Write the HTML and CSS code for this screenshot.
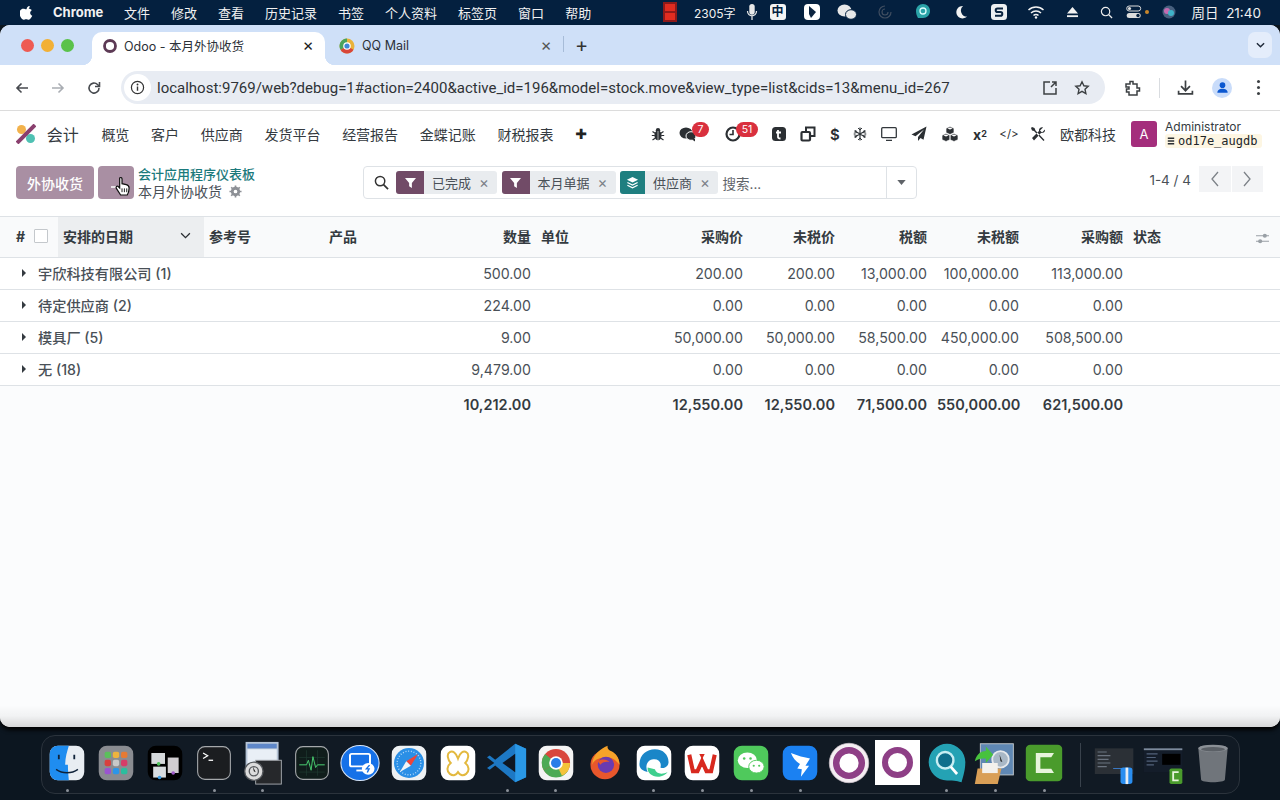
FILE: index.html
```html
<!DOCTYPE html>
<html lang="zh-CN">
<head>
<meta charset="utf-8">
<title>Odoo - 本月外协收货</title>
<link rel="stylesheet" href="styles.css">
</head>
<body>
<header class="menubar">
  <svg class="apple" viewBox="0 0 14 16"><path fill="#fff" d="M10.4 1c.1 1-.3 1.9-.9 2.6-.6.7-1.5 1.200-2.400 1.100-.1-1 .4-1.900.9-2.500C8.600 1.500 9.600 1 10.400 1zM13.200 11.500c-.4.900-.6 1.300-1.100 2-.7 1.100-1.600 2.400-2.800 2.400-1 0-1.300-.6-2.700-.6s-1.700.6-2.700.6c-1.200 0-2.100-1.200-2.800-2.200C-.8 10.800-1 7.500.2 5.800 1 4.600 2.300 3.900 3.500 3.900c1.300 0 2.100.7 3.100.7 1 0 1.600-.7 3.100-.7 1.100 0 2.200.6 3 1.600-2.600 1.400-2.200 5.100.5 6z"/></svg>
  <b class="appname">Chrome</b>
  <nav class="menus"><span>文件</span><span>修改</span><span>查看</span><span>历史记录</span><span>书签</span><span>个人资料</span><span>标签页</span><span>窗口</span><span>帮助</span></nav>
  <div class="status">
    <svg class="st st-rec" viewBox="0 0 14 20"><rect width="14" height="20" fill="#8e1a1a"/><rect x="2" y="2" width="10" height="7" fill="#e02c20"/><rect x="2" y="11" width="10" height="7" fill="#e02c20"/></svg>
    <span class="st-count">2305字</span>
    <svg class="st st-mic" viewBox="0 0 14 20"><rect x="4" y="1" width="6" height="12" rx="3" fill="#e8e8e8"/><path d="M2 9c0 7 10 7 10 0M7 15v4" stroke="#e8e8e8" fill="none" stroke-width="1.400"/></svg>
    <span class="st-ime">中</span>
    <svg class="st st-tag" viewBox="0 0 16 16"><rect width="16" height="16" rx="4" fill="#fff"/><path d="M5 2l7 6-5 6-2-4z" fill="#0b2440"/></svg>
    <svg class="st st-chat" viewBox="0 0 20 16"><ellipse cx="7.500" cy="6.500" rx="7" ry="6" fill="#e8e8e8"/><ellipse cx="14" cy="10.500" rx="5.500" ry="4.800" fill="#e8e8e8" stroke="#04203f"/></svg>
    <svg class="st st-spiral" viewBox="0 0 16 16"><path d="M8 2a6 6 0 1 0 6 6M8 5a3 3 0 1 0 3 3" fill="none" stroke="#3f4d60" stroke-width="1.200"/></svg>
    <svg class="st st-q" viewBox="0 0 16 18"><path d="M8 1c4 0 7 3 7 7s-3 7-7 7H3C2 13 1 11 1 8c0-4 3-7 7-7z" fill="#2aa3a8"/><circle cx="8" cy="8" r="3" fill="none" stroke="#dff" stroke-width="1.300"/></svg>
    <svg class="st st-moon" viewBox="0 0 14 14"><path d="M9 1a6.200 6.200 0 1 0 4 10.500A6 6 0 0 1 9 1z" fill="#f2f2f2"/></svg>
    <svg class="st st-s" viewBox="0 0 16 16"><rect width="16" height="16" rx="3.500" fill="#eef0f2"/><path d="M12 4.500H6.500a1.800 1.800 0 0 0 0 3.600h3a1.800 1.800 0 0 1 0 3.600H4" fill="none" stroke="#0b2440" stroke-width="2"/></svg>
    <svg class="st st-wifi" viewBox="0 0 18 14"><path d="M1.500 5a11 11 0 0 1 15 0M4 8a7.300 7.300 0 0 1 10 0M6.500 10.500a3.500 3.500 0 0 1 5 0" fill="none" stroke="#f2f2f2" stroke-width="1.500"/><circle cx="9" cy="12.500" r="1.200" fill="#f2f2f2"/></svg>
    <svg class="st st-eject" viewBox="0 0 14 12"><path d="M7 0l6 7H1z" fill="#f2f2f2"/><rect x="1" y="9" width="12" height="2" fill="#f2f2f2"/></svg>
    <svg class="st st-search" viewBox="0 0 14 14"><circle cx="6" cy="6" r="4.500" fill="none" stroke="#eee" stroke-width="1.300"/><path d="M9.500 9.500l3.500 3.500" stroke="#eee" stroke-width="1.400"/></svg>
    <svg class="st st-cc" viewBox="0 0 16 14"><rect x=".7" y="1" width="14" height="5" rx="2.500" fill="none" stroke="#ddd"/><circle cx="3.500" cy="3.500" r="1.600" fill="#ddd"/><rect x=".7" y="8" width="14" height="5" rx="2.500" fill="#ddd"/><circle cx="12" cy="10.500" r="1.700" fill="#04203f"/></svg>
    <i class="st-dot"></i>
    <svg class="st st-siri" viewBox="0 0 14 14"><circle cx="7" cy="7" r="6.500" fill="#47607f"/><circle cx="5" cy="6" r="3" fill="#c46bb2"/><circle cx="9" cy="8" r="3" fill="#3fb3c9"/></svg>
    <span class="st-clock">周日&nbsp; 21:40</span>
  </div>
</header>

<div class="window">
  <div class="tabstrip">
    <div class="lights"><i class="red"></i><i class="amber"></i><i class="green"></i></div>
    <div class="tab tab-active">
      <svg class="fav" viewBox="0 0 16 16"><circle cx="8" cy="8" r="5.500" fill="none" stroke="#5d3a55" stroke-width="2.800"/></svg>
      <span class="tab-title">Odoo - 本月外协收货</span><span class="tab-x">×</span>
    </div>
    <div class="tab tab-idle">
      <svg class="fav" viewBox="0 0 16 16"><circle cx="8" cy="8" r="7.500" fill="#e9b23a"/><path d="M8 8l6.500 3.700A7.500 7.500 0 0 1 1.500 11.700z" fill="#d8463a"/><path d="M8 8L1.500 11.700A7.500 7.500 0 0 1 8 .5z" fill="#4aa35c"/><circle cx="8" cy="8" r="3.800" fill="#fff"/><circle cx="8" cy="8" r="2.600" fill="#3f87d6"/></svg>
      <span class="tab-title">QQ Mail</span><span class="tab-x tab-x-dim">×</span>
    </div>
    <i class="tab-sep"></i>
    <span class="tab-plus">+</span>
    <span class="tab-menu"><svg viewBox="0 0 10 6"><path d="M1 1l4 4 4-4" fill="none" stroke="#1f2a3a" stroke-width="1.600"/></svg></span>
  </div>

  <div class="toolbar">
    <svg class="tb tb-back" viewBox="0 0 16 16"><path d="M14 8H3M7.500 3.500L3 8l4.500 4.500" fill="none" stroke="#474a4f" stroke-width="1.600"/></svg>
    <svg class="tb tb-fwd" viewBox="0 0 16 16"><path d="M2 8h11M8.500 3.500L13 8l-4.500 4.500" fill="none" stroke="#a9adb3" stroke-width="1.600"/></svg>
    <svg class="tb tb-reload" viewBox="0 0 16 16"><path d="M13 8a5 5 0 1 1-1.500-3.500L13 6" fill="none" stroke="#474a4f" stroke-width="1.600"/><path d="M13.500 2v4.500H9" fill="none" stroke="#474a4f" stroke-width="1.600"/></svg>
    <div class="omnibox">
      <span class="info"><svg viewBox="0 0 16 16"><circle cx="8" cy="8" r="6.500" fill="none" stroke="#333" stroke-width="1.300"/><path d="M8 7v4.500" stroke="#333" stroke-width="1.500"/><circle cx="8" cy="4.800" r="1" fill="#333"/></svg></span>
      <span class="url">localhost:9769/web?debug=1#action=2400&amp;active_id=196&amp;model=stock.move&amp;view_type=list&amp;cids=13&amp;menu_id=267</span>
      <svg class="omni-i omni-open" viewBox="0 0 16 16"><path d="M8 2H2v12h12V8M9 7l5-5M10 2h4v4" fill="none" stroke="#3c4043" stroke-width="1.500"/></svg>
      <svg class="omni-i omni-star" viewBox="0 0 16 16"><path d="M8 1.800l1.900 4 4.300.5-3.200 3 .9 4.300L8 11.400l-3.900 2.200.9-4.300-3.200-3 4.300-.5z" fill="none" stroke="#3c4043" stroke-width="1.400"/></svg>
    </div>
    <svg class="tb tb-ext" viewBox="0 0 18 18"><path d="M3 5h4V2.500h3V5h4v4h2.500v3H14v4H6v-3H3.500v-3H6V8H3z" fill="none" stroke="#3c4043" stroke-width="1.500"/></svg>
    <i class="tb-sep"></i>
    <svg class="tb tb-dl" viewBox="0 0 16 16"><path d="M8 1.500v9M3.800 6.800L8 11l4.200-4.200M1.500 11v3h13v-3" fill="none" stroke="#3c4043" stroke-width="1.600"/></svg>
    <span class="profile"><svg viewBox="0 0 16 16"><circle cx="8" cy="5.500" r="3" fill="#0b57d0"/><path d="M2.500 13.500c0-3 2.500-4.300 5.500-4.300s5.500 1.300 5.500 4.300z" fill="#0b57d0"/></svg></span>
    <span class="kebab"><i></i><i></i><i></i></span>
  </div>

  <div class="app">
    <div class="o-nav">
      <div class="o-left">
        <svg class="o-logo" viewBox="0 0 20 20"><circle cx="5.500" cy="5.500" r="4.500" fill="#f2b24c"/><circle cx="14.500" cy="14.500" r="4.500" fill="#4fc1b3"/><path d="M1 19L19 1" stroke="#8a3f6e" stroke-width="4"/></svg>
        <span class="o-app">会计</span>
        <span>概览</span><span>客户</span><span>供应商</span><span>发货平台</span><span>经营报告</span><span>金蝶记账</span><span>财税报表</span>
        <b class="o-plus">✚</b>
      </div>
      <div class="o-right">
        <span class="ni"><svg viewBox="0 0 14 14"><ellipse cx="7" cy="8.500" rx="3.600" ry="4.800" fill="#2b2f33"/><circle cx="7" cy="3.200" r="2.200" fill="#2b2f33"/><path d="M7 4v9" stroke="#fff" stroke-width=".6"/><path d="M1.500 4.500l3 2M12.500 4.500l-3 2M.8 8.500h3M13.200 8.500h-3M1.500 13l3-2M12.500 13l-3-2" stroke="#2b2f33" stroke-width="1.200"/></svg></span>
        <span class="ni g10"><svg class="i18" viewBox="0 0 18 16"><ellipse cx="7" cy="7" rx="6.500" ry="5.500" fill="#2b2f33"/><ellipse cx="12" cy="10" rx="5" ry="4.300" fill="#2b2f33" stroke="#fff"/><path d="M13 13.500l3 2v-3z" fill="#2b2f33"/></svg><b class="badge b-chat">7</b></span>
        <span class="ni g25"><svg class="i18" viewBox="0 0 16 16"><circle cx="8" cy="8" r="6.500" fill="none" stroke="#2b2f33" stroke-width="2.200"/><path d="M8 4v4.500H4.500" fill="none" stroke="#2b2f33" stroke-width="1.600"/></svg><b class="badge b-clock">51</b></span>
        <span class="ni g26"><svg viewBox="0 0 14 14"><rect width="14" height="14" rx="3.500" fill="#2b2f33"/><path d="M6 3v7c0 1 .6 1.500 2.500 1.500M4 5.500h5" stroke="#fff" stroke-width="1.800" fill="none"/></svg></span>
        <span class="ni g9"><svg class="i16" viewBox="0 0 16 16"><path d="M6 5V1.500h8.500V10H11" fill="none" stroke="#2b2f33" stroke-width="2"/><rect x="1.500" y="6" width="8.500" height="8.500" rx="1" fill="none" stroke="#2b2f33" stroke-width="2.200"/></svg></span>
        <span class="ni g7 ni-text">$</span>
        <span class="ni g5"><svg viewBox="0 0 14 14"><path d="M7 .5v13M1.400 3.800l11.200 6.400M12.600 3.800L1.400 10.200" stroke="#33383c" stroke-width="1.200"/><path d="M5 1l2 2 2-2M5 13l2-2 2 2M.8 6.200l2.700-.5-.9-2.700M13.200 7.800l-2.700.5.900 2.700M13.200 6.200l-2.700-.5.900-2.700M.8 7.800l2.700.5-.9 2.700" stroke="#33383c" fill="none" stroke-width="1"/></svg></span>
        <span class="ni g9"><svg class="i16" viewBox="0 0 16 14"><rect x=".7" y=".7" width="14.600" height="10" rx="1" fill="none" stroke="#33383c" stroke-width="1.300"/><path d="M5 13.300h6" stroke="#33383c" stroke-width="1.300"/></svg></span>
        <span class="ni g10"><svg class="i16" viewBox="0 0 16 16"><path d="M15.500.5L.5 8.500l4 1.800L13 3.500 7 11v4l2.500-3 3 1.800z" fill="#2b2f33"/></svg></span>
        <span class="ni g11"><svg class="i18" viewBox="0 0 18 16"><path d="M9 .5l4 1.800v4.400L9 8.500 5 6.700V2.300zM5 7.500l4 1.800v4.400l-4 1.800-4-1.800V9.300zM13 7.500l4 1.800v4.400l-4 1.800-4-1.800V9.300z" fill="#2b2f33" stroke="#fff" stroke-width=".7"/><path d="M6.500 2.500L9 3.600l2.500-1.100-2.500-1zM2.500 9.500L5 10.600l2.500-1.100L5 8.500zM10.500 9.500l2.500 1.100 2.500-1.100-2.500-1z" fill="#fff"/></svg></span>
        <span class="ni g10 ni-sup">x<sup>2</sup></span>
        <span class="ni g9 ni-code">&lt;/&gt;</span>
        <span class="ni g9"><svg class="i16" viewBox="0 0 16 16"><path d="M2 1l2.500 1 1 2.500L14.500 14 13.500 15 4 5 2 4.500 1 2zM15 3.500l-3 3-2-2 3-3c-2-.6-4.500 1-4 3.500L2 12l2 2.500L11 7c2.500.5 4.600-1.500 4-3.500z" fill="#2b2f33"/></svg></span>
        <span class="o-company">欧都科技</span>
        <span class="avatar">A</span>
        <div class="user"><span class="user-name">Administrator</span><span class="user-db"><svg viewBox="0 0 10 12"><path d="M1 1.500h8v2H1zM1 5h8v2H1zM1 8.500h8v2H1z" fill="#2b2f33"/></svg>od17e_augdb</span></div>
      </div>
    </div>

    <div class="cp">
      <div class="cp-left">
        <button class="btn btn-main">外协收货</button>
        <button class="btn btn-dl"><svg viewBox="0 0 12 12"><path d="M1 10h7" stroke="#fff" stroke-width="1.500"/></svg></button>
        <div class="crumbs">
          <a class="crumb-link">会计应用程序仪表板</a>
          <span class="crumb-now">本月外协收货 <svg viewBox="0 0 14 14"><circle cx="7" cy="7" r="3.500" fill="none" stroke="#8d9096" stroke-width="3"/><path d="M7 .5v3M7 10.500v3M.5 7h3M10.500 7h3M2.400 2.400l2 2M9.600 9.600l2 2M11.600 2.400l-2 2M4.400 9.600l-2 2" stroke="#8d9096" stroke-width="1.800"/></svg></span>
        </div>
      </div>
      <div class="search">
        <svg class="search-i" viewBox="0 0 16 16"><circle cx="6.500" cy="6.500" r="5" fill="none" stroke="#333" stroke-width="1.600"/><path d="M10.200 10.200L15 15" stroke="#333" stroke-width="1.800"/></svg>
        <span class="facet"><span class="facet-i"><svg viewBox="0 0 12 12"><path d="M0 1h12L7.500 6.500V12L4.500 10V6.500z" fill="#fff"/></svg></span><span class="facet-t">已完成</span><span class="facet-x">×</span></span>
        <span class="facet"><span class="facet-i"><svg viewBox="0 0 12 12"><path d="M0 1h12L7.500 6.500V12L4.500 10V6.500z" fill="#fff"/></svg></span><span class="facet-t">本月单据</span><span class="facet-x">×</span></span>
        <span class="facet facet-teal"><span class="facet-i"><svg viewBox="0 0 14 14"><path d="M7 1l6 3-6 3-6-3z" fill="#fff"/><path d="M1.500 7L7 9.800 12.500 7M1.500 10L7 12.800 12.500 10" fill="none" stroke="#fff" stroke-width="1.400"/></svg></span><span class="facet-t">供应商</span><span class="facet-x">×</span></span>
        <span class="search-ph">搜索...</span>
        <span class="search-dd"><svg viewBox="0 0 10 6"><path d="M0 0h10L5 6z" fill="#5f6368"/></svg></span>
      </div>
      <div class="pager">
        <span class="pager-t">1-4 / 4</span>
        <div class="pager-b">
          <span><svg viewBox="0 0 10 16"><path d="M8 1L2 8l6 7" fill="none" stroke="#7d8288" stroke-width="1.300"/></svg></span>
          <span><svg viewBox="0 0 10 16"><path d="M2 1l6 7-6 7" fill="none" stroke="#7d8288" stroke-width="1.300"/></svg></span>
        </div>
      </div>
    </div>

    <table class="list">
      <colgroup><col class="c1"><col class="c2"><col class="c3"><col class="c4"><col class="c5"><col class="c6"><col class="c7"><col class="c8"><col class="c9"><col class="c10"><col class="c11"><col class="c12"></colgroup>
      <thead>
        <tr>
          <th class="th-sel"><span class="hash">#</span><i class="chk"></i></th>
          <th class="th-sort"><span>安排的日期</span><svg viewBox="0 0 12 8"><path d="M1 1.500l5 5 5-5" fill="none" stroke="#2b2f33" stroke-width="1.500"/></svg></th>
          <th>参考号</th><th>产品</th><th class="r">数量</th><th>单位</th><th class="r">采购价</th><th class="r">未税价</th><th class="r">税额</th><th class="r">未税额</th><th class="r">采购额</th>
          <th class="th-status"><span>状态</span><svg viewBox="0 0 16 14"><path d="M1 4h14M1 10h14" stroke="#9aa0a6" stroke-width="1.200"/><circle cx="10.500" cy="4" r="2.200" fill="#9aa0a6"/><circle cx="5.500" cy="10" r="2.200" fill="#9aa0a6"/></svg></th>
        </tr>
      </thead>
      <tbody>
        <tr><td colspan="4" class="group"><i class="caret"></i>宇欣科技有限公司 (1)</td><td class="r">500.00</td><td></td><td class="r">200.00</td><td class="r">200.00</td><td class="r">13,000.00</td><td class="r">100,000.00</td><td class="r">113,000.00</td><td></td></tr>
        <tr><td colspan="4" class="group"><i class="caret"></i>待定供应商 (2)</td><td class="r">224.00</td><td></td><td class="r">0.00</td><td class="r">0.00</td><td class="r">0.00</td><td class="r">0.00</td><td class="r">0.00</td><td></td></tr>
        <tr><td colspan="4" class="group"><i class="caret"></i>模具厂 (5)</td><td class="r">9.00</td><td></td><td class="r">50,000.00</td><td class="r">50,000.00</td><td class="r">58,500.00</td><td class="r">450,000.00</td><td class="r">508,500.00</td><td></td></tr>
        <tr><td colspan="4" class="group"><i class="caret"></i>无 (18)</td><td class="r">9,479.00</td><td></td><td class="r">0.00</td><td class="r">0.00</td><td class="r">0.00</td><td class="r">0.00</td><td class="r">0.00</td><td></td></tr>
      </tbody>
      <tfoot>
        <tr><td colspan="4"></td><td class="r">10,212.00</td><td></td><td class="r">12,550.00</td><td class="r">12,550.00</td><td class="r">71,500.00</td><td class="r">550,000.00</td><td class="r">621,500.00</td><td></td></tr>
      </tfoot>
    </table>
    <div class="list-rest"></div>
  </div>
  <svg class="hand" viewBox="0 0 18 22"><path d="M6 2c1-1 2.500-.5 2.500 1v5l4.500 1c2 .5 3 1.500 3 3.500 0 3-.5 5-2 7.500H7L2.500 13c-1-1.500.8-3 2-2L6 12.500z" fill="#fff" stroke="#111" stroke-width="1.300"/><path d="M8.500 13v4M11 13v4M13.500 13v4" stroke="#111"/></svg>
</div>

<footer class="dock">
  <div class="slot on"><svg viewBox="0 0 44 44"><rect x="3" y="3" width="38" height="38" rx="9" fill="#e8edf2"/><path d="M12 3h12c-2 7-4 13-4 21h3c0 6 .5 11 1 17H12a9 9 0 0 1-9-9V12a9 9 0 0 1 9-9z" fill="#1f8df0"/><path d="M13 13v5M30 13v5" stroke="#10233a" stroke-width="2"/><path d="M10 29c7 5 17 5 24 0" fill="none" stroke="#10233a" stroke-width="1.600"/></svg></div>
  <div class="slot"><svg viewBox="0 0 44 44"><rect x="3" y="3" width="38" height="38" rx="9" fill="#8a8c91"/><g><rect x="9.500" y="9.500" width="7" height="7" rx="2" fill="#5bc05c"/><rect x="18.500" y="9.500" width="7" height="7" rx="2" fill="#eeb33e"/><rect x="27.500" y="9.500" width="7" height="7" rx="2" fill="#e67a34"/><rect x="9.500" y="18.500" width="7" height="7" rx="2" fill="#d8403e"/><rect x="18.500" y="18.500" width="7" height="7" rx="2" fill="#c8c8c8"/><rect x="27.500" y="18.500" width="7" height="7" rx="2" fill="#d63c68"/><rect x="9.500" y="27.500" width="7" height="7" rx="2" fill="#9a55d0"/><rect x="18.500" y="27.500" width="7" height="7" rx="2" fill="#2c95e8"/><rect x="27.500" y="27.500" width="7" height="7" rx="2" fill="#2bbd9e"/></g></svg></div>
  <div class="slot"><svg viewBox="0 0 44 44"><rect x="3" y="3" width="38" height="38" rx="9" fill="#000"/><rect x="7" y="11" width="15" height="12" fill="#d5d8da"/><rect x="25" y="16" width="12" height="17" fill="#d0cdd0"/><rect x="9" y="26" width="14" height="12" fill="#d8dcdf"/><circle cx="15" cy="23" r="2" fill="#4cc158"/><circle cx="31" cy="33" r="2" fill="#a05bc8"/><circle cx="16" cy="38" r="2" fill="#3c9be0"/></svg></div>
  <div class="slot on"><svg viewBox="0 0 44 44"><rect x="4" y="4" width="36" height="36" rx="8" fill="#1b1d20" stroke="#a5a8ab" stroke-width="1.200"/><path d="M10 11l5 3-5 3" fill="none" stroke="#fff" stroke-width="1.400"/><path d="M16 19h5" stroke="#fff" stroke-width="1.400"/></svg></div>
  <div class="slot on"><svg class="big" viewBox="0 0 44 48"><rect x="3" y="1" width="36" height="36" fill="#b6c4d6"/><rect x="5" y="3" width="32" height="5" fill="#5e87c9"/><rect x="5" y="9" width="32" height="26" fill="#e9eff6"/><rect x="14" y="21" width="28" height="26" fill="#26282b" stroke="#a9adb2"/><circle cx="12" cy="33" r="10" fill="#dcdcdc" stroke="#55585c" stroke-width="1.500"/><circle cx="12" cy="33" r="5" fill="none" stroke="#55585c" stroke-width="1.500"/><path d="M11 28l3 6-2-1z" fill="#111"/></svg></div>
  <div class="slot"><svg viewBox="0 0 44 44"><rect x="4" y="4" width="36" height="36" rx="8" fill="#101d1b" stroke="#a5a8ab" stroke-width="1.200"/><path d="M8 16h28M8 24h28M8 32h28M16 8v28M28 8v28" stroke="#1e3a30" stroke-width=".8"/><path d="M8 24h8l2-5 3 11 2-15 3 12 2-3h8" fill="none" stroke="#47c66c" stroke-width="1.100"/></svg></div>
  <div class="slot"><svg class="mid" preserveAspectRatio="none" viewBox="0 0 44 48"><circle cx="22" cy="24" r="21" fill="#1671e8" stroke="#d6e4f7" stroke-width="1.200"/><rect x="11" y="13" width="22" height="15" rx="2" fill="none" stroke="#fff" stroke-width="2.200"/><path d="M18 33h8" stroke="#fff" stroke-width="2.200"/><circle cx="31" cy="31" r="7" fill="#fff"/><path d="M32.500 26.500L29 31h3l-2 4.500" fill="none" stroke="#1671e8" stroke-width="1.600"/></svg></div>
  <div class="slot"><svg viewBox="0 0 44 44"><rect x="3" y="3" width="38" height="38" rx="9" fill="#eef1f3"/><circle cx="22" cy="22" r="16.500" fill="#2a8fe6"/><circle cx="22" cy="22" r="13" fill="none" stroke="#bfe0fb" stroke-dasharray="1 2" stroke-width="1.500"/><path d="M32 12L19 20l5 5z" fill="#ef4438"/><path d="M12 32l7-12 5 5z" fill="#f2f4f6"/></svg></div>
  <div class="slot"><svg viewBox="0 0 44 44"><rect x="3" y="3" width="38" height="38" rx="9" fill="#fff"/><path d="M22 17c-2-6-6-9-9-7-4 2-2 9 1 12-4 3-5 9-1 12 4 3 7 1 9-2 2 3 5 5 9 2 4-3 3-9-1-12 3-3 5-10 1-12-3-2-7 1-9 7z" fill="none" stroke="#e3b93f" stroke-width="2.200"/></svg></div>
  <div class="slot on"><svg class="mid" preserveAspectRatio="none" viewBox="0 0 44 48"><path d="M31 1l12 6v34l-12 6L9 27 3 32l-3-2 8-6-8-7 3-2 6 5z" fill="#1d78c4"/><path d="M31 1l12 6v34l-12 6z" fill="#2a98e6"/><path d="M31 13L17 24l14 11z" fill="#0f1722"/></svg></div>
  <div class="slot on"><svg viewBox="0 0 44 44"><rect x="3" y="3" width="38" height="38" rx="9" fill="#f4f4f4"/><circle cx="22" cy="22" r="15.500" fill="#d9463c"/><path d="M22 22L8.500 30A15.500 15.500 0 0 1 10 12z" fill="#4caa55"/><path d="M22 22l13.500 8A15.500 15.500 0 0 1 8.500 30z" fill="#4caa55"/><path d="M22 22h15.500a15.500 15.500 0 0 1-9 14L22 22z" fill="#f4c33a"/><circle cx="22" cy="22" r="7.500" fill="#fff"/><circle cx="22" cy="22" r="5.500" fill="#2a7de8"/></svg></div>
  <div class="slot"><svg viewBox="0 0 44 44"><circle cx="22" cy="24" r="16" fill="#e8572c"/><path d="M8 24C8 12 18 6 25 3c-1 3 1 5 4 6 5 2 9 8 9 15-5-6-8-8-14-8-8 0-14 2-16 8z" fill="#f6a22a"/><circle cx="23" cy="24" r="9" fill="#6a3bb0"/><path d="M14 20c4-3 11-2 13 1-4-1-8 0-10 3z" fill="#e8572c"/></svg></div>
  <div class="slot on"><svg viewBox="0 0 44 44"><rect x="3" y="3" width="38" height="38" rx="9" fill="#fff"/><path d="M6 24C6 13 14 7 23 7c9 0 15 6 15 14 0 5-5 8-9 6 2-6-3-10-8-9-7 1-9 8-6 14-5-1-9-4-9-8z" fill="#1a86c8"/><path d="M15 27c-1 6 6 11 13 10 4-.5 7-2 9-5-6 3-13 2-14-3z" fill="#3fcf8e"/></svg></div>
  <div class="slot on"><svg viewBox="0 0 44 44"><rect x="3" y="3" width="38" height="38" rx="9" fill="#fff"/><path d="M8 13l4 18h5l5-11 5 11h5l4-18" fill="none" stroke="#d8291f" stroke-width="4.500"/><path d="M19 12h6l-3 6z" fill="#d8291f"/></svg></div>
  <div class="slot on"><svg viewBox="0 0 44 44"><rect x="3" y="3" width="38" height="38" rx="9" fill="#4fc95c"/><ellipse cx="18" cy="19" rx="10.500" ry="8.500" fill="#fff"/><ellipse cx="28" cy="26" rx="8.500" ry="7" fill="#fff" stroke="#4fc95c"/><circle cx="14.500" cy="17" r="1.400" fill="#4fc95c"/><circle cx="21.500" cy="17" r="1.400" fill="#4fc95c"/><circle cx="25" cy="25" r="1.200" fill="#4fc95c"/><circle cx="31" cy="25" r="1.200" fill="#4fc95c"/></svg></div>
  <div class="slot on"><svg viewBox="0 0 44 44"><rect x="3" y="3" width="38" height="38" rx="9" fill="#1b81f2"/><path d="M12 11c7 3 15 5 21 6l-5 8h4l-9 12 1-8-5-1 3-5c-5-3-8-7-10-12z" fill="#fff"/></svg></div>
  <div class="slot"><svg class="big" viewBox="0 0 44 48"><circle cx="22" cy="24" r="21.500" fill="#f4eef2" stroke="#cfc4cc" stroke-width=".8"/><circle cx="22" cy="24" r="14" fill="#fff" stroke="#8e3f86" stroke-width="7"/></svg></div>
  <div class="slot slot-white"><svg viewBox="0 0 45 45"><rect width="45" height="45" fill="#fff"/><circle cx="22.500" cy="22.500" r="12.500" fill="#fff" stroke="#8e3f86" stroke-width="6"/></svg></div>
  <div class="slot on"><svg class="big" viewBox="0 0 44 48"><path d="M22 3c11 0 20 9 20 20s-4 20-4 22c-3-1-8-2-16-2C11 43 2 34 2 23S11 3 22 3z" fill="#24a2b4"/><circle cx="20" cy="21" r="9" fill="#0f6f8c" stroke="#c7eef3" stroke-width="2.600"/><path d="M26 28l7 8" stroke="#fff" stroke-width="3"/></svg></div>
  <div class="slot on"><svg class="big" viewBox="0 0 44 48"><rect x="6" y="3" width="36" height="34" fill="#5f87b3" stroke="#c5c9cd"/><circle cx="28" cy="20" r="9" fill="#a9b8c6" stroke="#e6e9ec" stroke-width="2"/><path d="M27 15l3 8-2-1z" fill="#222"/><path d="M0 22c2-8 7-11 12-11V6l8 9-8 9v-5c-4 0-8 0-12 3z" fill="#47c23e"/><path d="M3 30h26l-4 17H0z" fill="#d99f56"/><rect x="8" y="24" width="17" height="11" fill="#f3f1ec"/></svg></div>
  <div class="slot on"><svg class="mid" preserveAspectRatio="none" viewBox="0 0 44 48"><rect x="2" y="2" width="40" height="44" rx="5" fill="#4a9b2c"/><path d="M33 12H13v24h20l-3-5H18V17h12z" fill="#e8f4dc"/></svg></div>
  <i class="dock-sep"></i>
  <div class="slot"><svg class="big" viewBox="0 0 44 48"><rect x="0" y="8" width="42" height="28" fill="#2b3036"/><path d="M3 12h10M3 16h14M3 20h12M3 24h14M3 28h10" stroke="#6b7480" stroke-width="1.200"/><path d="M20 30h20" stroke="#3c7fd0"/><rect x="28" y="29" width="13" height="18" rx="3" fill="#2a8ef0"/><path d="M35 29v18" stroke="#e8edf2" stroke-width="3"/></svg></div>
  <div class="slot"><svg class="big" viewBox="0 0 44 48"><rect x="0" y="8" width="42" height="26" fill="#141d2a"/><rect x="0" y="8" width="42" height="2" fill="#7c8a9c"/><rect x="20" y="14" width="20" height="12" fill="#000"/><path d="M3 14h12M3 18h10M3 22h12M3 26h8" stroke="#51617a" stroke-width="1.200"/><rect x="28" y="30" width="14" height="17" rx="2" fill="#4a9b2c"/><path d="M38 34h-6v9h6" fill="none" stroke="#e8f4dc" stroke-width="2"/></svg></div>
  <div class="slot"><svg class="big" viewBox="0 0 44 48"><path d="M6 8c0-5 32-5 32 0l-3 34c0 4-26 4-26 0z" fill="#70757b"/><ellipse cx="22" cy="8" rx="16" ry="4" fill="#8b9096"/><ellipse cx="22" cy="9" rx="13" ry="2.500" fill="#5b6066"/></svg></div>
</footer>
</body>
</html>
```

FILE: styles.css
```css
* { box-sizing: border-box; }
html, body { margin: 0; height: 100%; }
body {
  width: 1280px; height: 800px; overflow: hidden;
  display: flex; flex-direction: column;
  background: #0c1620;
  font-family: "Inter", "Noto Sans CJK SC", "Liberation Sans", sans-serif;
  font-size: 14px; color: #495057;
}
svg { display: block; flex: none; }

/* mac menu bar */
.menubar { height: 25px; flex: none; display: flex; align-items: center; padding-bottom: 1px; background: #04203f; color: #f1f1f1; font-size: 13px; position: relative; }
.apple { width: 13px; height: 15px; margin-left: 20px; }
.appname { margin-left: 20px; width: 51px; font-weight: 700; font-size: 13px; }
.menus { display: flex; gap: 21px; margin-left: 20px; }
.status { margin-left: auto; display: flex; align-items: center; padding-right: 19px; }
.st-rec { width: 14px; height: 20px; margin-right: 17px; }
.st-count { font-size: 12px; }
.st-mic { width: 14px; height: 18px; margin-left: 9px; }
.st-ime { width: 16px; height: 16px; background: #f4f4f4; color: #04203f; border-radius: 3px; font-size: 12px; line-height: 16px; text-align: center; margin-left: 11px; font-weight: 700; }
.st-tag { width: 16px; height: 16px; margin-left: 18px; }
.st-chat { width: 20px; height: 16px; margin-left: 17px; }
.st-spiral { width: 16px; height: 16px; margin-left: 20px; }
.st-q { width: 16px; height: 18px; margin-left: 22px; }
.st-moon { width: 14px; height: 14px; margin-left: 23px; }
.st-s { width: 16px; height: 16px; margin-left: 23px; }
.st-wifi { width: 18px; height: 14px; margin-left: 20px; }
.st-eject { width: 13px; height: 11px; margin-left: 21px; }
.st-search { width: 13px; height: 13px; margin-left: 21px; }
.st-cc { width: 16px; height: 14px; margin-left: 13px; }
.st-dot { width: 4px; height: 4px; border-radius: 50%; background: #c8862c; margin-left: 3px; }
.st-siri { width: 14px; height: 14px; margin-left: 13px; }
.st-clock { margin-left: 16px; font-size: 13.500px; }

/* chrome window */
.window { height: 702px; flex: none; position: relative; background: #fff; border-radius: 10px; overflow: hidden; display: flex; flex-direction: column; box-shadow: 0 3px 4px #000; }
.window::after { content: ""; position: absolute; left: 0; right: 0; bottom: 0; height: 22px; background: linear-gradient(to bottom, rgba(0,0,0,0), rgba(0,0,0,.04) 50%, rgba(0,0,0,.15)); pointer-events: none; }
.tabstrip { height: 40px; flex: none; background: #cfe0f8; display: flex; align-items: flex-end; color: #2c3138; position: relative; font-size: 12.500px; }
.lights { display: flex; gap: 7px; width: 92px; padding-left: 21px; align-self: center; }
.lights i { width: 13px; height: 13px; border-radius: 50%; }
.red { background: #ee5a52; } .amber { background: #f2b035; } .green { background: #5ac24a; }
.tab { height: 33px; width: 233px; display: flex; align-items: center; padding: 0 10px 6px; position: relative; }
.tab-active { background: #fff; border-radius: 10px 10px 0 0; }
.tab-active::before, .tab-active::after { content: ""; position: absolute; bottom: 0; width: 10px; height: 10px; }
.tab-active::before { left: -10px; background: radial-gradient(circle at 0 0, #cfe0f8 10px, #fff 10.500px); }
.tab-active::after { right: -10px; background: radial-gradient(circle at 100% 0, #cfe0f8 10px, #fff 10.500px); }
.fav { width: 16px; height: 16px; margin-right: 6px; }
.tab-idle { margin-left: 4px; width: 234px; }
.tab-idle .fav { margin-right: 7px; }
.tab-title { flex: 1; white-space: nowrap; }
.tab-x { font-size: 17px; color: #222; line-height: 1; width: 14px; text-align: center; }
.tab-x-dim { color: #555; }
.tab-sep { width: 1px; height: 16px; background: #a7bcd8; margin: 0 0 13px 0; }
.tab-plus { font-size: 20px; line-height: 27px; margin-bottom: 6px; margin-left: 11px; color: #333; }
.tab-menu { margin-left: auto; margin-right: 8px; margin-bottom: 7px; width: 24px; height: 26px; border-radius: 7px; background: #e4edfb; display: flex; align-items: center; justify-content: center; }
.tab-menu svg { width: 9px; height: 6px; }

.toolbar { height: 46px; flex: none; display: flex; align-items: center; background: #fff; border-bottom: 1px solid #dcdcdc; }
.tb { width: 16px; height: 16px; }
.tb-back { margin-left: 14px; }
.tb-fwd { margin-left: 20px; }
.tb-reload { margin-left: 20px; }
.omnibox { width: 984px; height: 33px; margin-left: 19px; border-radius: 17px; background: #e8ecf3; display: flex; align-items: center; }
.info { width: 27px; height: 27px; margin-left: 3px; border-radius: 50%; background: #fff; display: flex; align-items: center; justify-content: center; }
.info svg { width: 15px; height: 15px; }
.url { margin-left: 6px; width: 885px; font-family: "Roboto", "Liberation Sans", sans-serif; font-size: 15px; color: #2f3337; white-space: nowrap; }
.omni-i { width: 16px; height: 16px; }
.omni-star { margin-left: 16px; }
.tb-ext { width: 18px; height: 18px; margin-left: 18px; }
.tb-sep { width: 1px; height: 20px; background: #d9dce0; margin-left: 18px; }
.tb-dl { margin-left: 17px; width: 17px; height: 17px; }
.profile { width: 20px; height: 20px; margin-left: 18px; border-radius: 50%; background: #c9dcfa; display: flex; align-items: center; justify-content: center; }
.profile svg { width: 15px; height: 15px; }
.kebab { margin-left: 25px; display: flex; flex-direction: column; gap: 3px; }
.kebab i { width: 3px; height: 3px; border-radius: 50%; background: #3c4043; }

/* odoo */
.app { flex: 1; display: flex; flex-direction: column; }
.o-nav { height: 46px; flex: none; display: flex; align-items: center; justify-content: space-between; padding: 0 18px 0 16px; color: #343a40; }
.o-left { display: flex; align-items: center; gap: 21.700px; padding-bottom: 1px; }
.o-logo { width: 20px; height: 20px; margin-right: -11px; }
.o-app { font-size: 16px; width: 33px; }
.o-plus { font-size: 14px; color: #222; margin-left: 0; margin-right: 0; font-family: "DejaVu Sans", sans-serif; }
.o-right { display: flex; align-items: center; }
.ni { width: 20px; height: 20px; display: flex; align-items: center; justify-content: center; position: relative; color: #2b2f33; }
.ni svg { width: 14px; height: 14px; }
.ni svg.i16 { width: 16px; height: 16px; }
.ni svg.i18 { width: 18px; height: 16px; }
.g5 { margin-left: 5px; } .g7 { margin-left: 7px; } .g9 { margin-left: 9px; } .g10 { margin-left: 10px; } .g11 { margin-left: 11px; } .g25 { margin-left: 25px; } .g26 { margin-left: 26px; }
.ni-text { font-size: 15px; font-weight: 600; }
.ni-sup { font-weight: 700; font-size: 14px; }
.ni-sup sup { font-size: 9px; line-height: 0; }
.ni-code { font-size: 11.500px; white-space: nowrap; }
.badge { position: absolute; top: -2px; height: 15px; border-radius: 8px; background: #d9303e; color: #fff; font-size: 10.500px; font-weight: 400; line-height: 15px; text-align: center; }
.b-chat { left: 14px; width: 17px; }
.b-clock { left: 13px; width: 22px; }
.o-company { margin-left: 12px; color: #343a40; }
.avatar { width: 26px; height: 26px; margin-left: 15px; border-radius: 3px; background: #a42e7c; color: #fff; font-size: 13px; line-height: 26px; text-align: center; }
.user { margin-left: 8px; width: 97px; display: flex; flex-direction: column; font-size: 12px; line-height: 14px; color: #343a40; }
.user-db { display: flex; align-items: center; gap: 3px; background: #fdf6e3; border-radius: 3px; padding: 0 2px; font-family: "DejaVu Sans Mono", monospace; font-size: 12px; color: #212529; }
.user-db svg { width: 8px; height: 10px; }

.cp { height: 59px; flex: none; display: flex; align-items: flex-start; padding: 9px 17px 0 16px; }
.cp-left { display: flex; width: 347px; align-items: flex-start; }
.btn { height: 33px; border: 0; border-radius: 4px; background: #a98fa3; color: #fff; font: inherit; font-weight: 500; padding: 0; }
.btn-main { width: 78px; }
.btn-dl { width: 36px; margin-left: 4px; display: flex; align-items: center; justify-content: center; }
.btn-dl svg { width: 12px; height: 12px; }
.crumbs { margin-left: 4px; display: flex; flex-direction: column; line-height: 17px; white-space: nowrap; }
.crumb-link { color: #1b7a7c; font-size: 13px; font-weight: 500; }
.crumb-now { display: flex; align-items: center; gap: 7px; font-size: 14px; color: #495057; }
.crumb-now svg { width: 13px; height: 13px; }
.search { width: 554px; height: 33px; border: 1px solid #dee2e6; border-radius: 4px; display: flex; align-items: center; gap: 4.500px; background: #fff; padding-left: 10px; }
.search-i { width: 15px; height: 15px; margin-right: 2.500px; }
.facet { display: flex; align-items: center; height: 23px; background: #e9ecef; border-radius: 3px; font-size: 13px; }
.facet-i { width: 28px; height: 23px; background: #714b67; border-radius: 3px 0 0 3px; display: flex; align-items: center; justify-content: center; }
.facet-i svg { width: 11px; height: 11px; }
.facet-teal .facet-i { background: #1f7f80; width: 25px; }
.facet-teal .facet-i svg { width: 13px; height: 13px; }
.facet-t { margin-left: 8px; }
.facet-x { width: 14px; margin: 0 6px; color: #7c8188; font-size: 15px; text-align: center; line-height: 1; }
.search-ph { flex: 1; font-size: 13.500px; color: #5f6368; }
.search-dd { width: 30px; height: 31px; border-left: 1px solid #dee2e6; display: flex; align-items: center; justify-content: center; }
.search-dd svg { width: 9px; height: 5px; }
.pager { margin-left: auto; display: flex; align-items: flex-start; gap: 8px; }
.pager-t { line-height: 28px; font-size: 13.500px; }
.pager-b { display: flex; gap: 1px; }
.pager-b span { width: 31.500px; height: 26px; background: #f3f4f6; display: flex; align-items: center; justify-content: center; }
.pager-b svg { width: 10px; height: 16px; }

.list { width: 1280px; table-layout: fixed; border-collapse: collapse; flex: none; }
.c1 { width: 58px; } .c2 { width: 146px; } .c3 { width: 120px; } .c4 { width: 112px; } .c5 { width: 100px; } .c6 { width: 112px; }
.c7 { width: 100px; } .c8 { width: 92px; } .c9 { width: 92px; } .c10 { width: 92px; } .c11 { width: 104px; } .c12 { width: 152px; }
.list th { height: 41px; padding: 0 5px 2px; background: #f9fafb; border-top: 1px solid #dee2e6; border-bottom: 1px solid #dee2e6; text-align: left; font-weight: 600; font-size: 14px; color: #343a40; }
.list td { height: 32px; padding: 0 5px 1px; border-bottom: 1px solid #dee2e6; white-space: nowrap; font-size: 14.200px; }
.list .r { text-align: right; }
.th-sel { padding-left: 16px !important; }
.hash { font-weight: 700; }
.chk { display: inline-block; width: 14px; height: 14px; margin-left: 9px; border: 1px solid #c4c8cc; border-radius: 1px; background: #fff; vertical-align: -1px; }
.list .th-sort { background: #eceef0; }
.th-sort svg { display: inline-block; width: 11px; height: 7px; margin-left: 47px; vertical-align: 3px; }
.th-status span { display: inline-block; width: 122px; }
.th-status svg { display: inline-block; width: 15px; height: 13px; vertical-align: -3px; }
.list .group { padding-left: 38px; position: relative; color: #495057; font-weight: 500; }
.caret { position: absolute; left: 22px; top: 11px; border-left: 4px solid #343a40; border-top: 4px solid transparent; border-bottom: 4px solid transparent; }
.list tfoot td { height: 38px; border-bottom: 0; font-size: 14.500px; font-weight: 600; color: #343a40; }
.list-rest { flex: 1; }
.list, .list-rest { background: #fbfcfd; }
.list tbody td { background: #fff; }
.hand { position: absolute; left: 114px; top: 151px; width: 17px; height: 21px; }

/* dock */
.dock { width: 1199px; height: 59px; flex: none; margin: 8px 0 0 41px; padding: 0 0 0 1px; border: 1px solid #2b333c; border-radius: 14px; background: #111a24; display: flex; align-items: flex-start; }
.slot { width: 48.850px; height: 57px; flex: none; position: relative; display: flex; justify-content: center; padding-top: 4px; }
.slot svg { width: 40px; height: 40px; margin-top: 3px; }
.slot svg.big { width: 44px; height: 44px; margin-top: 1px; }
.slot svg.mid { width: 40px; height: 40px; margin-top: 3px; }
.slot.on::after { content: ""; position: absolute; left: 23px; bottom: 1px; width: 3px; height: 3px; border-radius: 50%; background: #8b9199; }
.slot-white svg { width: 45px; height: 45px; margin-top: 0; }
.dock-sep { width: 1px; height: 44px; margin: 7px 10px 0 11px; background: #39424c; flex: none; }
```
